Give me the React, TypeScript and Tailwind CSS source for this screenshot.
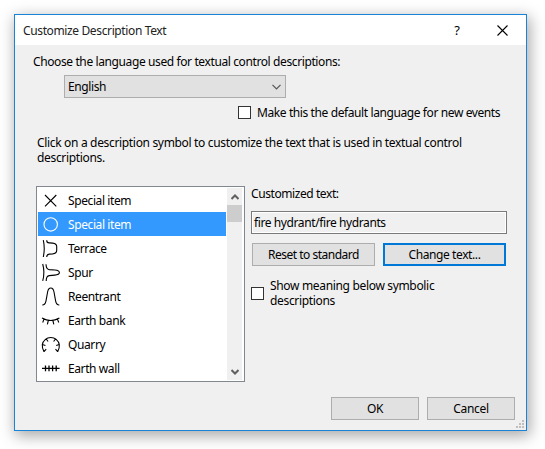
import React from "react";

type RowProps = { label: string; selected?: boolean; children: React.ReactNode };

function SymbolRow({ label, selected, children }: RowProps) {
  return (
    <div className={selected ? "flex h-6 items-center bg-[#3399ff] text-white" : "flex h-6 items-center"}>
      <svg className="ml-0.5 h-6 w-6 shrink-0" viewBox="0 0 24 24" fill="none" stroke="currentColor" strokeWidth="1.1">
        {children}
      </svg>
      <span className="ml-1 text-[12px] tracking-[-0.4px]">{label}</span>
    </div>
  );
}

function CheckBox() {
  return <span className="h-[13px] w-[13px] shrink-0 border border-[#333333] bg-white" />;
}

function Button({ children, primary, className }: { children: React.ReactNode; primary?: boolean; className: string }) {
  return (
    <button
      className={
        (primary ? "border-2 border-[#0078d7] " : "border border-[#adadad] ") +
        "flex h-[23px] items-center justify-center bg-[#e1e1e1] whitespace-nowrap " +
        className
      }
    >
      {children}
    </button>
  );
}

export default function App() {
  return (
    <div className="h-[449px] w-[545px] overflow-hidden bg-white p-[14px] font-['Noto_Sans','Open_Sans',sans-serif] text-[12px] leading-[15px] text-black">
      <div className="flex h-[417px] w-[513px] flex-col border border-[#1883d7] bg-[#f0f0f0] shadow-[2px_4px_14px_1px_rgba(0,0,0,0.34)]">
        <header className="flex h-[30px] shrink-0 items-center bg-white pl-2">
          <h1 className="tracking-[-0.37px] whitespace-nowrap text-[#222]">Customize Description Text</h1>
          <span className="mr-[37px] ml-auto text-[13px]">?</span>
          <svg className="mr-[18px] h-[11px] w-[11px]" viewBox="0 0 11 11" stroke="#000" strokeWidth="1.1">
            <path d="M.5.5l10 10M10.5.5l-10 10" />
          </svg>
        </header>

        <p className="mt-[9px] ml-[18px] tracking-[-0.39px] whitespace-nowrap">
          Choose the language used for textual control descriptions:
        </p>
        <div className="mt-[6px] ml-[49px] flex h-[23px] w-[222px] shrink-0 items-center justify-between border border-[#adadad] bg-[#e1e1e1] pr-1 pl-[3px]">
          <span className="tracking-[-0.4px]">English</span>
          <svg className="h-[6px] w-[9px]" viewBox="0 0 9 6" fill="none" stroke="#555" strokeWidth="1.2">
            <path d="M.5.8l4 4 4-4" />
          </svg>
        </div>
        <label className="mt-[7px] ml-[223px] flex h-[15px] shrink-0 items-center gap-[6px]">
          <CheckBox />
          <span className="tracking-[-0.4px] whitespace-nowrap">Make this the default language for new events</span>
        </label>
        <p className="mt-[15px] ml-[22px] tracking-[-0.33px] whitespace-nowrap">
          Click on a description symbol to customize the text that is used in textual control
          <br />
          descriptions.
        </p>

        <div className="mt-[21px] ml-[21px] flex h-[196px] shrink-0">
          <div className="flex w-[209px] shrink-0 border border-[#828790] bg-white p-px">
            <div className="w-[188px]">
              <SymbolRow label="Special item">
                <path d="M5 7l11.300 11.300M16.300 7L5 18.300" />
              </SymbolRow>
              <SymbolRow label="Special item" selected>
                <circle cx="10.700" cy="12.400" r="6.700" />
              </SymbolRow>
              <SymbolRow label="Terrace">
                <path d="M3.300 4.200q1.900 8.300 0 16.800M6.700 4.200q0 2.600 2.500 2.700l3.500.2q4 .4 4 3.400v3.800q0 3.200-4 3.600l-3.500.2q-2.500.2-2.500 2.900" />
              </SymbolRow>
              <SymbolRow label="Spur">
                <path d="M2.700 4q2.400 8.300 0 16.900M6 4.300q.2 5 3.200 5.300l5.600.4q4.600.3 4.600 2.600t-4.600 2.500l-5.600.5q-3 .4-3 5.300" />
              </SymbolRow>
              <SymbolRow label="Reentrant">
                <path d="M2.300 21q2.900 0 3.700-4.200L7.600 8q.7-4 3.200-4T14 8l1.600 8.800q.8 4.200 3.700 4.200" />
              </SymbolRow>
              <SymbolRow label="Earth bank">
                <path d="M2 10q8.700 5 17.400 0M4 11.100l-1.300 3.400M8.300 12.500l-.9 3.800M12.900 12.500l.9 3.800M17.400 11.100l1.400 3.400" />
              </SymbolRow>
              <SymbolRow label="Quarry">
                <path d="M4 19.600Q2 16.500 2.300 12.600A8.600 8.300 0 0 1 19.300 12.600Q19.700 16.500 17.700 19.600M4 19.600l2.200-2.400M17.700 19.600l-2.200-2.400M2.300 12.600l3.100 1M19.300 12.600l-3.100 1M5.800 6.500l2.300 3M15.900 6.500l-2.300 3" />
              </SymbolRow>
              <SymbolRow label="Earth wall">
                <path strokeWidth="1.3" d="M2 12.400h17.600M5.500 9.500v5.800M9 9.500v5.800M12.600 9.500v5.800M16.200 9.500v5.800" />
              </SymbolRow>
            </div>
            <div className="ml-px flex w-[15px] flex-col items-center bg-[#f0f0f0]">
              <svg className="mt-[6px] h-[6px] w-[8px]" viewBox="0 0 8 6" fill="none" stroke="#606060" strokeWidth="2">
                <path d="M.5 5l3.500-3.500L7.500 5" />
              </svg>
              <div className="mt-[5px] h-[17px] w-[15px] bg-[#cdcdcd]" />
              <svg className="mt-auto mb-[5px] h-[6px] w-[8px]" viewBox="0 0 8 6" fill="none" stroke="#606060" strokeWidth="2">
                <path d="M.5 1L4 4.500 7.500 1" />
              </svg>
            </div>
          </div>

          <div className="ml-[6px] w-[256px]">
            <p className="tracking-[-0.42px] whitespace-nowrap">Customized text:</p>
            <div className="mt-[10px] flex h-[23px] items-center border border-[#7a7a7a] bg-[#f0f0f0] pb-px pl-[2px] tracking-[-0.4px] inset-ring inset-ring-white">
              fire hydrant/fire hydrants
            </div>
            <div className="mt-[9px] ml-px flex gap-2">
              <Button className="w-[123px] tracking-[-0.5px]">Reset to standard</Button>
              <Button primary className="w-[123px] tracking-[-0.4px]">Change text...</Button>
            </div>
            <label className="mt-[12px] flex items-center gap-[6px]">
              <CheckBox />
              <span className="tracking-[-0.33px] whitespace-nowrap">
                Show meaning below symbolic
                <br />
                descriptions
              </span>
            </label>
          </div>
        </div>

        <footer className="mt-[15px] flex shrink-0 justify-end gap-2 pr-[11px]">
          <Button className="w-[88px] tracking-[-0.5px]">OK</Button>
          <Button className="w-[88px] tracking-[-0.3px]">Cancel</Button>
        </footer>
        <svg className="mr-[2px] h-[8px] w-[8px] shrink-0 self-end" viewBox="0 0 8 8" fill="#bfbfbf">
          <path d="M6 0h2v2h-2zM3 3h2v2h-2zM6 3h2v2h-2zM0 6h2v2h-2zM3 6h2v2h-2zM6 6h2v2h-2z" />
        </svg>
      </div>
    </div>
  );
}
